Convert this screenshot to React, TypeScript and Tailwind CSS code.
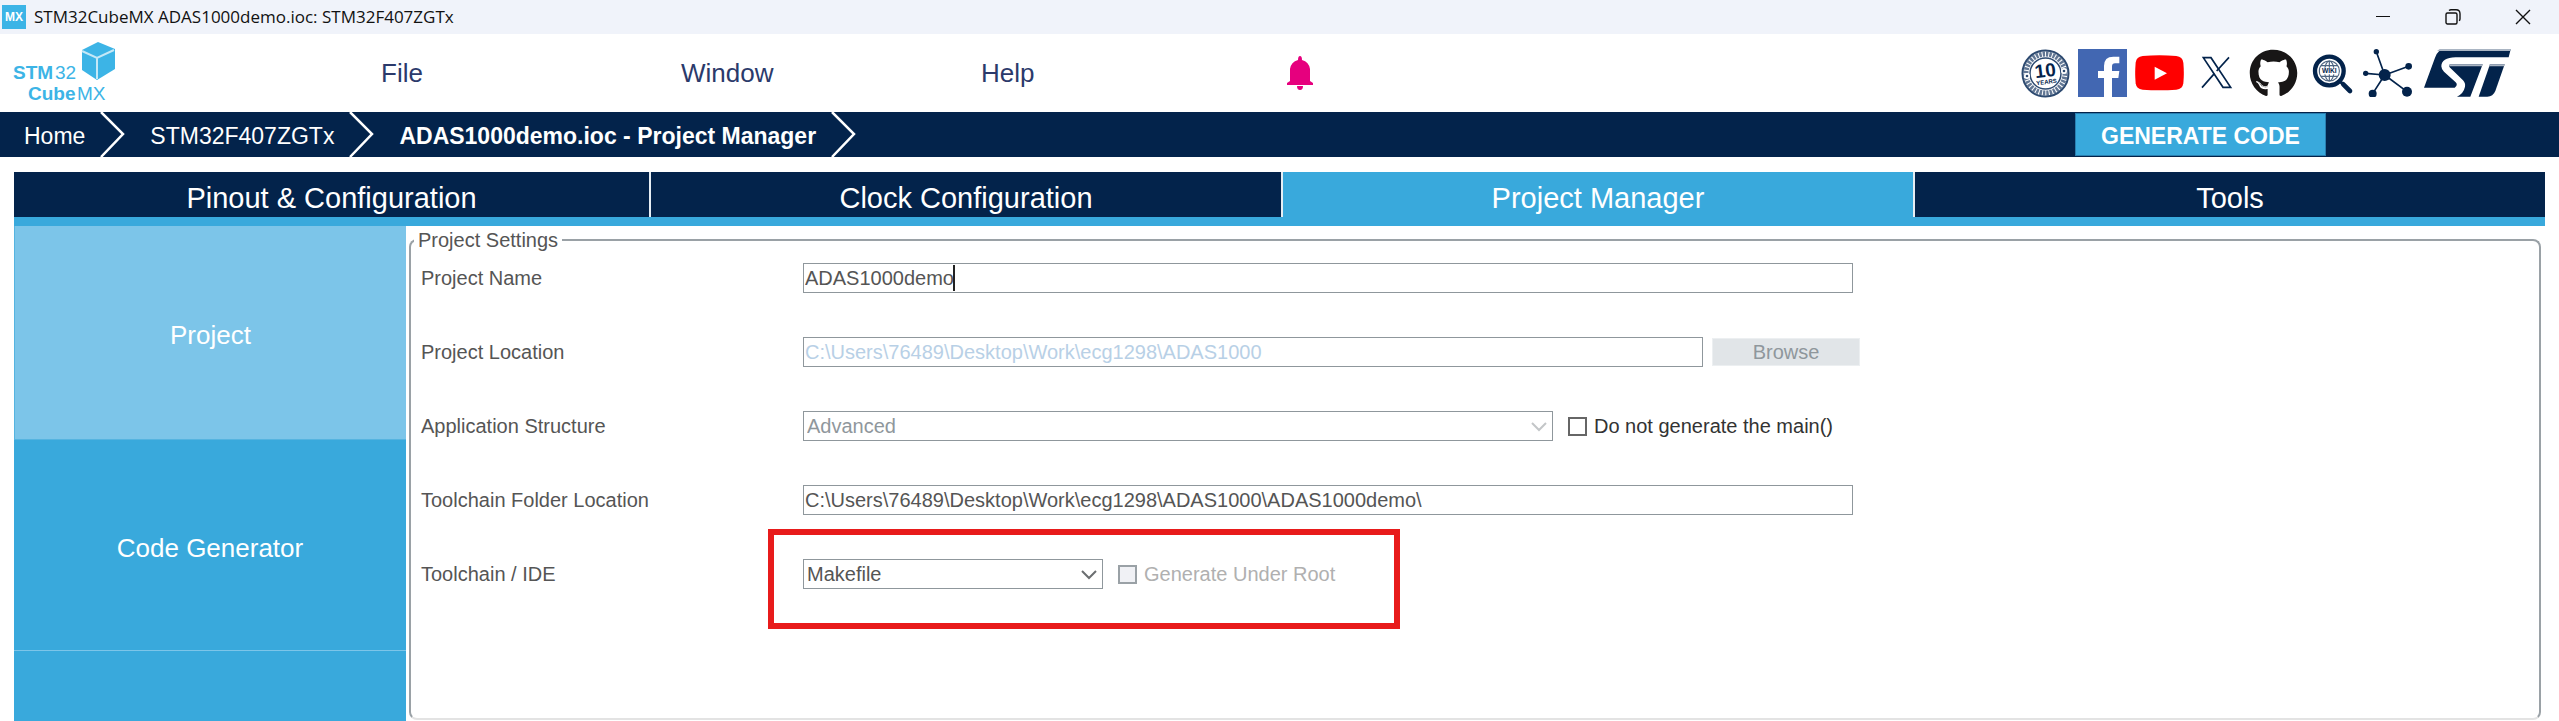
import { useState, type ReactNode } from "react";
import { FaGithub } from "react-icons/fa";

const socialLinks: { label: string; icon: ReactNode }[] = [
  { label: "Ten years anniversary", icon: <AnniversaryIcon /> },
  { label: "Facebook", icon: <FacebookIcon /> },
  { label: "YouTube", icon: <YouTubeIcon /> },
  { label: "X", icon: <XIcon /> },
  { label: "GitHub", icon: <FaGithub className="size-[49px] text-[#181616]" /> },
  { label: "Wiki", icon: <WikiIcon /> },
  { label: "Community", icon: <NetworkIcon /> },
];

function AnniversaryIcon() {
  return (
    <svg viewBox="0 0 49 49" className="size-[49px]" fill="none" stroke="#2d4a70">
      <circle cx="24.5" cy="24.5" r="23" strokeWidth="2" />
      <circle cx="24.5" cy="24.5" r="19.5" strokeWidth="5" strokeDasharray="2.4 1" opacity="0.75" />
      <circle cx="24.5" cy="24.5" r="15.5" strokeWidth="1.5" />
      <circle cx="6" cy="27" r="3" fill="#fff" stroke="none" />
      <circle cx="43" cy="22" r="3" fill="#fff" stroke="none" />
      <circle cx="6" cy="27" r="1.3" fill="#2d4a70" stroke="none" />
      <circle cx="43" cy="22" r="1.3" fill="#2d4a70" stroke="none" />
      <g transform="rotate(-7 24.5 24.5)" fill="#03234b" stroke="none" fontFamily="Liberation Sans, sans-serif" fontWeight="700" textAnchor="middle">
        <text x="24.5" y="28" fontSize="19">10</text>
        <text x="24.5" y="35" fontSize="6">YEARS</text>
      </g>
    </svg>
  );
}

function FacebookIcon() {
  return (
    <svg viewBox="234 27 147 144" className="h-12 w-[49px]">
      <path d="M234 27h147v144H234z" fill="#4267b2" />
      <path d="M312 171v-57h-18V93h18V78q0-28 28-28h18v20h-13q-9 0-9 9v14h22l-3 21h-19v57z" fill="#fff" />
    </svg>
  );
}

function YouTubeIcon() {
  return (
    <svg viewBox="405 27 147 144" className="h-12 w-[49px]">
      <path d="M428 48q50-5 101 0 19 2 21 20 3 31 0 62-2 17-21 19-51 4-101 0-19-2-21-19-3-31 0-62 2-18 21-20z" fill="#f00" />
      <path d="M464 80v39l37-19z" fill="#fff" />
    </svg>
  );
}

function XIcon() {
  return (
    <svg viewBox="576 27 147 144" className="h-12 w-[49px]" fill="none" stroke="#03234b">
      <path d="M610 53h23l59 89h-23z" strokeWidth="5" />
      <path d="M687 52l-37 41M643 101l-37 42" strokeWidth="5" />
    </svg>
  );
}

function WikiIcon() {
  return (
    <svg viewBox="199 27 147 144" className="h-12 w-[49px]" fill="none" stroke="#03234b">
      <circle cx="269" cy="93" r="43" strokeWidth="13" />
      <g strokeWidth="3.5" opacity="0.7">
        <circle cx="269" cy="93" r="30" />
        <ellipse cx="269" cy="93" rx="14" ry="30" />
        <path d="M269 63v60M244 77h50M244 109h50" />
      </g>
      <path d="M242 83h54v20h-54z" fill="#fff" stroke="none" />
      <text x="269" y="100" fontSize="20" fontWeight="700" fontFamily="Liberation Sans, sans-serif" textAnchor="middle" fill="#03234b" stroke="none">WIKI</text>
      <path d="M301 124l10 10" strokeWidth="9" />
      <path d="M311 133l20 20" strokeWidth="14" strokeLinecap="round" />
    </svg>
  );
}

function NetworkIcon() {
  return (
    <svg viewBox="369 27 147 144" className="h-12 w-[49px]" fill="#03234b" stroke="#03234b">
      <path d="M434 105L409 35M434 105l72-26M434 105l-57-5M434 105l-36 56M434 105l67 50" strokeWidth="5" />
      <g stroke="none">
        <circle cx="434" cy="105" r="18" />
        <circle cx="409" cy="35" r="8" />
        <circle cx="506" cy="79" r="10" />
        <circle cx="377" cy="100" r="8" />
        <circle cx="398" cy="161" r="12" />
        <circle cx="501" cy="155" r="15" />
      </g>
    </svg>
  );
}

function StLogo() {
  return (
    <svg viewBox="555 27 261 144" className="h-12 w-[87px]" role="img" aria-label="ST">
      <g fill="#03234b">
        <path d="M815 28l-6 24H650q-43 1-43 27 0 8 8 16l35 32q8 8-3 16H555l33-90q9-25 30-25z" />
        <path d="M633 73h98l-37 97h-40q20-10 24-30 2-11-6-19l-37-36q-8-7-2-12z" />
        <path d="M753 73h44l-28 80q-7 17-24 17h-26z" />
      </g>
      <path d="M602 27h214l-2 6H594zM631 73h100l-2 6h-98zM752 73h45l-2 6h-45z" fill="#aab5c3" />
    </svg>
  );
}

function CubeLogo() {
  return (
    <svg viewBox="0 0 104 64" className="h-16 w-[104px]" fill="#3cb4e6" role="img" aria-label="STM32 CubeMX">
      <path d="M85 1l17 7v20l-18 11-15-10V9z" />
      <path d="M69 10l15 7 17-8M84 17v21" fill="none" stroke="#c5e8f7" strokeWidth="2" />
      <g fontFamily="Liberation Sans, sans-serif" fontSize="19">
        <text x="0" y="38" fontWeight="700">STM</text>
        <text x="42" y="38">32</text>
        <text x="15" y="59" fontWeight="700">Cube</text>
        <text x="64" y="59">MX</text>
      </g>
    </svg>
  );
}

function BellIcon() {
  return (
    <svg viewBox="0 0 28 36" className="h-9 w-7" fill="#e6007e">
      <path d="M14 1q2 0 2 4 7 2 8 9v12l3 2v2H1v-2l3-2V14q1-7 8-9 0-4 2-4zM11 31h6q0 4-3 4t-3-4z" />
    </svg>
  );
}

function Crumb({ children, bold }: { children: ReactNode; bold?: boolean }) {
  return (
    <li className="flex h-full items-center">
      <a href="#" className={bold ? "pt-[2px] pl-6 font-bold" : "pt-[2px] pl-6"}>{children}</a>
      <svg viewBox="0 0 26 45" className="ml-[15px] h-full w-[26px]" fill="none" stroke="#fff" strokeWidth="2.5">
        <path d="M1 0l22 22L1 45" />
      </svg>
    </li>
  );
}

function Chevron({ muted }: { muted?: boolean }) {
  return (
    <svg viewBox="0 0 16 10" className="pointer-events-none absolute top-[11px] right-[6px] h-[10px] w-4" fill="none" stroke={muted ? "#c3c6c8" : "#6b6e70"} strokeWidth="2">
      <path d="M1 1l7 7 7-7" />
    </svg>
  );
}

const box = "h-[30px] w-full border border-[#8f979c] bg-white outline-none";
const tick = "size-[19px] shrink-0 appearance-none border-2";

export default function App() {
  const [name, setName] = useState("ADAS1000demo");
  const tabs = ["Pinout & Configuration", "Clock Configuration", "Project Manager", "Tools"];

  return (
    <div className="flex min-h-screen flex-col bg-white font-['Liberation_Sans',Arial,sans-serif]">
      <div className="flex h-[34px] items-center justify-between bg-[#f0f3fa] pr-7 pl-[2px]">
        <div className="flex items-center gap-2">
          <span className="flex size-6 items-center justify-center bg-[#3cb4e6] text-[12px] font-bold text-white">MX</span>
          <span className="font-['Open_Sans',sans-serif] text-[17px] leading-6 text-[#111]">STM32CubeMX ADAS1000demo.ioc: STM32F407ZGTx</span>
        </div>
        <div className="flex items-center gap-[54px]">
          <button aria-label="Minimize">
            <svg viewBox="0 0 16 16" className="size-4" stroke="#111"><path d="M1 7.5h14" /></svg>
          </button>
          <button aria-label="Restore">
            <svg viewBox="0 0 16 16" className="size-4" fill="none" stroke="#111" strokeWidth="1.4">
              <rect x="1" y="4" width="11" height="11" rx="1.5" />
              <path d="M4 1.5q1-.7 2-.7h5q4 0 4 4v5q0 1-.7 2" />
            </svg>
          </button>
          <button aria-label="Close">
            <svg viewBox="0 0 16 16" className="size-4" stroke="#111" strokeWidth="1.4"><path d="M1 1l14 14M15 1L1 15" /></svg>
          </button>
        </div>
      </div>

      <header className="flex h-[78px] items-center justify-between pr-12 pl-[13px]">
        <div className="flex items-center">
          <div className="w-[368px]">
            <CubeLogo />
          </div>
          <nav className="grid grid-cols-[300px_300px_305px_28px] items-center text-[26px] leading-8 text-[#2b3a6b]">
            <a href="#">File</a>
            <a href="#">Window</a>
            <a href="#">Help</a>
            <button aria-label="Notifications"><BellIcon /></button>
          </nav>
        </div>
        <div className="flex items-center gap-2">
          {socialLinks.map((s) => (
            <a key={s.label} href="#" aria-label={s.label}>{s.icon}</a>
          ))}
          <a href="#" aria-label="ST home" className="pl-1"><StLogo /></a>
        </div>
      </header>

      <div className="flex h-[45px] items-center justify-between bg-[#03234b] pr-[233px] text-[23px] leading-7 text-white">
        <ol className="flex h-full items-center">
          <Crumb>Home</Crumb>
          <Crumb>STM32F407ZGTx</Crumb>
          <Crumb bold>ADAS1000demo.ioc - Project Manager</Crumb>
        </ol>
        <button className="h-[43px] w-[251px] border border-[#2a7fb0] bg-[#39a9dc] pt-[2px] font-bold">GENERATE CODE</button>
      </div>

      <div className="flex grow flex-col pt-[15px] pr-[14px] pl-[14px]">
        <div role="tablist" className="grid grid-cols-[637fr_632fr_632fr_630fr] border-b-[9px] border-[#39a9dc]">
          {tabs.map((t, i) => (
            <button
              key={t}
              role="tab"
              aria-selected={i === 2}
              className={`h-[45px] pt-[6px] text-[29px] leading-8 text-white ${i === 2 ? "bg-[#39a9dc]" : "bg-[#03234b]"} ${i < 3 ? "border-r-2 border-[#e6eef4]" : ""}`}
            >
              {t}
            </button>
          ))}
        </div>

        <div className="flex grow">
          <aside className="flex w-[392px] shrink-0 flex-col bg-[#39a9dc] text-[26px] text-white">
            <button className="h-[214px] border-b border-l border-[#55b4e0] bg-[#7cc5e9] pt-[6px]">Project</button>
            <button className="h-[211px] border-b border-[#7cc5e9] pt-[6px]">Code Generator</button>
          </aside>

          <main className="flex grow pt-[2px] pr-1 pb-px pl-[3px]">
            <fieldset className="min-w-0 grow rounded-[8px] border-2 border-[#9aa1a6] border-b-[#e3e3e3] pl-[10px] text-[20px] leading-6 text-[#555]">
              <legend className="-ml-[7px] px-1">Project Settings</legend>
              <div className="grid grid-cols-[382px_1fr] items-center gap-y-11 pt-[11px]">
                <label htmlFor="name">Project Name</label>
                <div className="relative w-full max-w-[1050px]">
                  <input id="name" className={`${box} pl-px`} value={name} onChange={(e) => setName(e.target.value)} />
                  <span className="pointer-events-none absolute top-[2px] left-[150px] h-[26px] w-[2px] bg-[#222]" />
                </div>

                <label htmlFor="location">Project Location</label>
                <div className="flex max-w-[1058px] items-center gap-[9px]">
                  <input id="location" disabled className={`${box} max-w-[900px] pl-px text-[#b8d0e6]`} defaultValue="C:\Users\76489\Desktop\Work\ecg1298\ADAS1000" />
                  <button disabled className="h-[28px] w-[148px] shrink-0 border border-[#eceff1] bg-[#e1e5e8] text-[#8f979c]">Browse</button>
                </div>

                <label htmlFor="structure">Application Structure</label>
                <div className="flex items-center gap-[15px]">
                  <div className="relative w-[750px]">
                    <select id="structure" disabled className={`${box} appearance-none pl-[3px] text-[#8f979c] opacity-100`}>
                      <option>Advanced</option>
                    </select>
                    <Chevron muted />
                  </div>
                  <label className="flex items-center gap-[7px] text-[#333]">
                    <input type="checkbox" className={`${tick} border-[#666] bg-white`} />
                    Do not generate the main()
                  </label>
                </div>

                <label htmlFor="folder">Toolchain Folder Location</label>
                <input id="folder" className={`${box} max-w-[1050px] pl-px`} defaultValue="C:\Users\76489\Desktop\Work\ecg1298\ADAS1000\ADAS1000demo\" />

                <label htmlFor="ide">Toolchain / IDE</label>
                <div className="relative flex items-center gap-[15px]">
                  <div className="relative w-[300px]">
                    <select id="ide" className={`${box} appearance-none pl-[3px]`}>
                      <option>Makefile</option>
                    </select>
                    <Chevron />
                  </div>
                  <label className="flex items-center gap-[7px] text-[#b0b0b0]">
                    <input type="checkbox" disabled className={`${tick} border-[#9aa1a6] bg-[#f0f1f5]`} />
                    Generate Under Root
                  </label>
                  <div className="pointer-events-none absolute -top-[30px] -left-[35px] h-[100px] w-[632px] border-[6px] border-[#e81b1b]" />
                </div>
              </div>
            </fieldset>
          </main>
        </div>
      </div>
    </div>
  );
}
